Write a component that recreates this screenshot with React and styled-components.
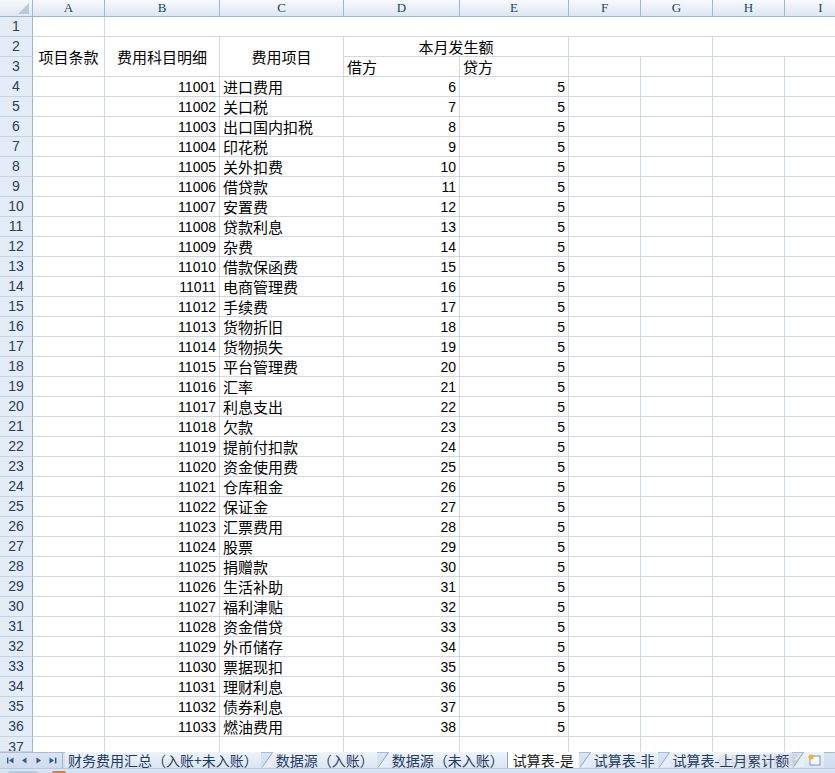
import React from "react";
import styled, { createGlobalStyle } from "styled-components";

const GlobalStyle = createGlobalStyle`
  html, body {
    margin: 0;
    padding: 0;
    background: #ffffff;
  }
  body {
    font-family: "Liberation Sans", "Noto Sans CJK SC", sans-serif;
  }
`;

const GRID = "#d0d7e5";
const HEAD_LINE = "#9eb6ce";

const Window = styled.div`
  width: 835px;
  height: 773px;
  overflow: hidden;
  position: relative;
  display: flex;
  flex-direction: column;
  background: #ffffff;
`;

const Sheet = styled.div`
  display: grid;
  grid-template-columns: 33px 72px 115px 124px 116px 109px 72px 72px 72px 72px;
  grid-template-rows: 17px repeat(36, 20px) 15px;
  width: 857px;
  flex: none;
`;

const Corner = styled.div`
  position: relative;
  background: linear-gradient(#f6f9fd, #dfe8f4);
  border-right: 1px solid ${HEAD_LINE};
  border-bottom: 1px solid ${HEAD_LINE};
  &::after {
    content: "";
    position: absolute;
    right: 3px;
    bottom: 2px;
    border-left: 11px solid transparent;
    border-bottom: 11px solid #b9c9de;
  }
`;

const ColHead = styled.div`
  background: linear-gradient(#f8fafd 0%, #e9eff8 55%, #dde6f2 100%);
  border-right: 1px solid ${HEAD_LINE};
  border-bottom: 1px solid ${HEAD_LINE};
  color: #27415f;
  font-family: "Liberation Serif", "DejaVu Serif", serif;
  font-size: 13px;
  line-height: 16px;
  text-align: center;
`;

const RowHead = styled.div`
  background: #e4ecf7;
  border-right: 1px solid ${HEAD_LINE};
  border-bottom: 1px solid #c5d3e6;
  color: #27415f;
  font-size: 14px;
  line-height: ${(p) => (p.$short ? "20px" : "19px")};
  text-align: center;
  overflow: hidden;
`;

const Cell = styled.div`
  grid-column: span ${(p) => p.$cols || 1};
  grid-row: span ${(p) => p.$rows || 1};
  border-right: 1px solid ${GRID};
  border-bottom: 1px solid ${(p) => (p.$noBottom ? "transparent" : GRID)};
  display: flex;
  align-items: center;
  justify-content: ${(p) =>
    p.$align === "right" ? "flex-end" : p.$align === "center" ? "center" : "flex-start"};
  padding: 0 3px;
  overflow: hidden;
  white-space: nowrap;
  color: #000000;
  font-family: ${(p) =>
    p.$num ? `"Liberation Sans", sans-serif` : `"Noto Sans CJK SC", sans-serif`};
  font-size: ${(p) => (p.$num ? "14px" : "15px")};
  line-height: 18px;
`;

const TabBar = styled.div`
  height: 15px;
  flex: none;
  display: flex;
  align-items: stretch;
  background: linear-gradient(#dae4f2, #cfdcee);
  border-top: 1px solid #a9bdd8;
`;

const Nav = styled.div`
  width: 56px;
  flex: none;
  display: flex;
  align-items: center;
  justify-content: space-around;
  padding: 0 3px;
  border-right: 1px solid #9fb4d2;
`;

const Tabs = styled.div`
  display: flex;
  align-items: stretch;
  padding-left: 2px;
`;

const Tab = styled.div`
  display: flex;
  align-items: center;
  padding: 0 ${(p) => (p.$active ? "5px" : "3px")};
  margin-top: -1px;
  background: ${(p) => (p.$active ? "#ffffff" : "linear-gradient(#eef3fa, #dbe5f2)")};
  border-left: ${(p) => (p.$active ? "1px solid #8ea6c6" : "none")};
  color: ${(p) => (p.$active ? "#1a1a1a" : "#1f3a66")};
  font-family: "Noto Sans CJK SC", sans-serif;
  font-size: 14px;
  line-height: 15px;
  white-space: nowrap;
`;

const Slash = styled.svg`
  flex: none;
  width: 12px;
  height: 16px;
  margin-top: -1px;
`;

const StatusBar = styled.div`
  height: 22px;
  flex: none;
  display: flex;
  align-items: flex-start;
  gap: 14px;
  padding: 2px 8px 0;
  background: linear-gradient(#d8e4f3, #c3d5ec);
  border-top: 1px solid #b4c7e0;
`;

const StatusItem = styled.div`
  width: ${(p) => p.$w}px;
  height: 12px;
  border-radius: 2px;
  background: ${(p) => p.$color};
`;

const Watermark = styled.div`
  position: absolute;
  left: 718px;
  top: 749px;
  font-family: "Liberation Sans", "Noto Sans CJK SC", sans-serif;
  font-size: 13px;
  font-weight: 700;
  color: rgba(150, 150, 150, 0.22);
  pointer-events: none;
`;

const names = [
  "进口费用", "关口税", "出口国内扣税", "印花税", "关外扣费", "借贷款", "安置费",
  "贷款利息", "杂费", "借款保函费", "电商管理费", "手续费", "货物折旧", "货物损失",
  "平台管理费", "汇率", "利息支出", "欠款", "提前付扣款", "资金使用费", "仓库租金",
  "保证金", "汇票费用", "股票", "捐赠款", "生活补助", "福利津贴", "资金借贷",
  "外币储存", "票据现扣", "理财利息", "债券利息", "燃油费用",
];

const cols = ["A", "B", "C", "D", "E", "F", "G", "H", "I"];

function NavArrow({ dir, bar }) {
  const left = dir === "left";
  return (
    <svg width="9" height="9" viewBox="0 0 9 9">
      {bar && <rect x={left ? 1 : 7} y="1.5" width="1.4" height="6" fill="#2f5a94" />}
      <path
        d={left ? (bar ? "M7.5 1.5 L3 4.5 L7.5 7.5 Z" : "M6.5 1.5 L2 4.5 L6.5 7.5 Z") : bar ? "M1.5 1.5 L6 4.5 L1.5 7.5 Z" : "M2.5 1.5 L7 4.5 L2.5 7.5 Z"}
        fill="#2f5a94"
      />
    </svg>
  );
}

function Sep() {
  return (
    <Slash viewBox="0 0 12 16">
      <path d="M0 15.5 L12 15.5 L12 0 Z" fill="#e8eef7" />
      <line x1="1" y1="15.5" x2="11.5" y2="0.5" stroke="#8ea6c6" strokeWidth="1" />
    </Slash>
  );
}

function BodyRow({ n }) {
  const i = n - 4;
  return (
    <>
      <RowHead>{n}</RowHead>
      <Cell />
      <Cell $align="right" $num>{11001 + i}</Cell>
      <Cell>{names[i]}</Cell>
      <Cell $align="right" $num>{6 + i}</Cell>
      <Cell $align="right" $num>5</Cell>
      <Cell />
      <Cell />
      <Cell />
      <Cell />
    </>
  );
}

export default function App() {
  const bodyRows = [];
  for (let n = 4; n <= 36; n++) bodyRows.push(<BodyRow key={n} n={n} />);

  return (
    <Window>
      <GlobalStyle />
      <Sheet>
        <Corner />
        {cols.map((c) => (
          <ColHead key={c}>{c}</ColHead>
        ))}

        <RowHead>1</RowHead>
        <Cell />
        <Cell $cols={8} />

        <RowHead>2</RowHead>
        <Cell $rows={2} $align="center">项目条款</Cell>
        <Cell $rows={2} $align="center">费用科目明细</Cell>
        <Cell $rows={2} $align="center">费用项目</Cell>
        <Cell $cols={2} $align="center">本月发生额</Cell>
        <Cell $cols={2} />
        <Cell $cols={2} />

        <RowHead>3</RowHead>
        <Cell>借方</Cell>
        <Cell>贷方</Cell>
        <Cell />
        <Cell />
        <Cell />
        <Cell />

        {bodyRows}

        <RowHead $short>37</RowHead>
        {cols.map((c) => (
          <Cell key={c} $noBottom />
        ))}
      </Sheet>

      <TabBar>
        <Nav>
          <NavArrow dir="left" bar />
          <NavArrow dir="left" />
          <NavArrow dir="right" />
          <NavArrow dir="right" bar />
        </Nav>
        <Tabs>
          <Tab>财务费用汇总（入账+未入账）</Tab>
          <Sep />
          <Tab>数据源（入账）</Tab>
          <Sep />
          <Tab>数据源（未入账）</Tab>
          <Tab $active>试算表-是</Tab>
          <Sep />
          <Tab>试算表-非</Tab>
          <Sep />
          <Tab>试算表-上月累计额</Tab>
          <Sep />
          <Tab>
            <svg width="14" height="12" viewBox="0 0 14 12">
              <rect x="3" y="2" width="10" height="9" fill="#f4f7fb" stroke="#7d95b8" />
              <circle cx="4" cy="3" r="2.6" fill="#f2b233" />
            </svg>
          </Tab>
        </Tabs>
      </TabBar>

      <StatusBar>
        <StatusItem $w={30} $color="#b9cbe3" />
        <StatusItem $w={14} $color="#e07b39" />
      </StatusBar>

      <Watermark>@51CTO博客</Watermark>
    </Window>
  );
}
